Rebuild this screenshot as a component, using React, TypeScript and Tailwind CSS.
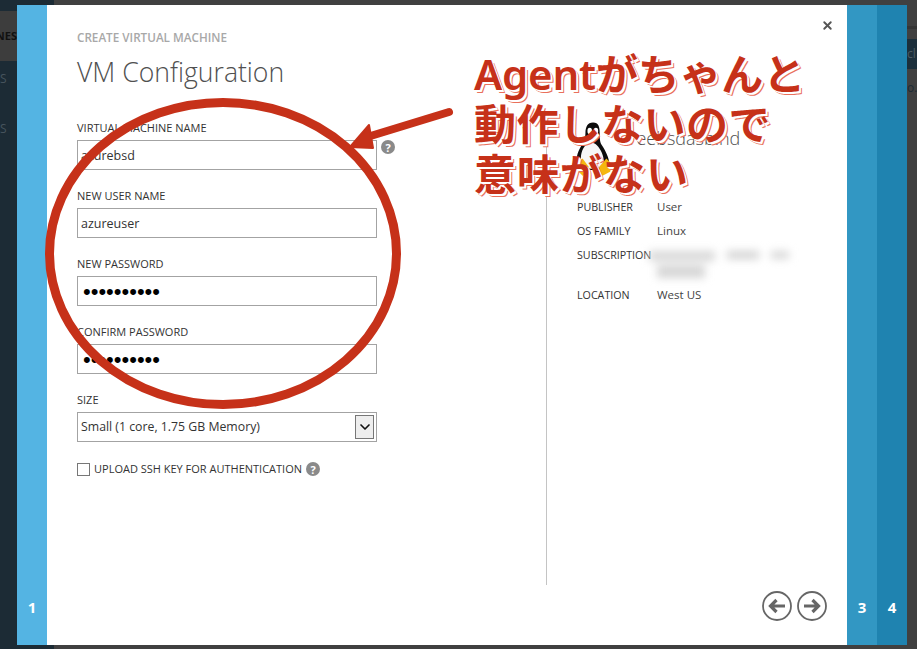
import React from "react";
import { X, ChevronDown } from "lucide-react";

const font = "font-['Open_Sans','Noto_Sans',sans-serif]";

const Help = () => (
  <span className="flex h-[14px] w-[14px] items-center justify-center rounded-full bg-[#8a8a8a] text-[11px] leading-none font-bold text-white">
    ?
  </span>
);

const Field = ({ label, value, password }: { label: string; value: string; password?: boolean }) => (
  <div className="h-[68px]">
    <div className="h-[20px] text-[11px] leading-[16px] font-medium text-[#333]">{label}</div>
    <input
      type={password ? "password" : "text"}
      defaultValue={value}
      className={
        password
          ? "block h-[30px] w-[300px] border border-[#a3a3a3] bg-white px-[5px] font-['Liberation_Sans',sans-serif] text-[22px] text-black outline-none"
          : "block h-[30px] w-[300px] border border-[#a3a3a3] bg-white px-[3px] text-[12.5px] text-[#333] outline-none"
      }
    />
  </div>
);

const Detail = ({ label, children, tall }: { label: string; children: React.ReactNode; tall?: boolean }) => (
  <div className={`flex ${tall ? "h-[40px]" : "h-[24px]"}`}>
    <div className="w-[80px] shrink-0 overflow-hidden text-[10.7px] leading-[24px] font-medium whitespace-nowrap text-[#333]">
      {label}
    </div>
    <div className="text-[11.5px] leading-[24px] text-[#444]">{children}</div>
  </div>
);

const Tux = () => (
  <svg width="38" height="58" viewBox="0 0 40 60" className="ml-[-2px] shrink-0">
    <path d="M19 1c-6 0-8 5-8 11 0 5-1 8-4 13-3 5-6 11-5 18 1 5 4 8 7 8h20c4 0 7-3 7-7 0-6-4-13-7-18-3-4-3-8-3-14S25 1 19 1z" fill="#0c0c0c" />
    <path d="M12 24c-5 5-7 13-5 19 2 5 6 7 12 7s10-2 11-7c1-6-3-14-7-18-3-3-8-4-11-1z" fill="#f6f6f6" />
    <ellipse cx="15.5" cy="10" rx="2.4" ry="3.4" fill="#fff" />
    <ellipse cx="22" cy="10" rx="2.4" ry="3.4" fill="#fff" />
    <path d="M14 15c2-2 8-2 10 0-2 3-8 3-10 0z" fill="#e9a413" />
    <path d="M1 44l7-5 6 8 1 7-7 3-6-6z" fill="#f5b70f" />
    <path d="M26 47l7-8 6 6-2 8-8 4-4-4z" fill="#f5b70f" />
  </svg>
);

const Annotation = () => (
  <>
    <svg className="absolute top-0 left-0" width="917" height="649" viewBox="0 0 917 649">
      <ellipse cx="223" cy="253.5" rx="173.5" ry="151" fill="none" stroke="#c63119" strokeWidth="9" />
      <path d="M449 112L364 138" stroke="#c63119" strokeWidth="8" strokeLinecap="round" />
      <path d="M350 147L369 125L373 148z" fill="#c63119" stroke="#c63119" strokeWidth="2" strokeLinejoin="round" />
    </svg>
    <div className="absolute top-[49px] left-[474px] font-['Noto_Sans','Noto_Sans_CJK_JP',sans-serif] text-[42px] leading-[50px] font-semibold whitespace-nowrap text-[#c63119] [text-shadow:1px_1px_0_#fff,2px_2px_0_#fff,3px_3px_0_#e9705c]">
      <div className="tracking-[-0.2px]">Agentがちゃんと</div>
      <div className="tracking-[0.4px]">動作しないので</div>
      <div className="tracking-[1px]">意味がない</div>
    </div>
  </>
);

export default function App() {
  return (
    <div className={`relative h-[649px] w-[917px] overflow-hidden bg-[#404040] ${font}`}>
      {/* page behind the dialog */}
      <div className="flex h-full justify-between">
        <div className="w-[54px] bg-[#1c2b35] pt-[11px]">
          <div className="flex h-[50px] items-center justify-end bg-[#3d3d3d] pr-[37px] text-[11px] font-bold text-[#111]">NES</div>
          <div className="mt-[9px] pr-[49px] text-right text-[12px] text-[#46545d]">S</div>
          <div className="mt-[32px] pr-[49px] text-right text-[12px] text-[#46545d]">S</div>
        </div>
        <div className="w-[10px] overflow-hidden pt-[26px]">
          <div className="h-[3px] bg-[#353535]" />
          <div className="mt-[10px] h-[30px] whitespace-nowrap bg-[#1c2f3b] text-[12px] leading-[30px] text-[#4c5a63]">cl</div>
          <div className="mt-[10px] text-[12px] whitespace-nowrap text-[#1c2b35]">o.n</div>
        </div>
      </div>

      {/* dialog */}
      <div className="absolute top-[5px] left-[17px] flex h-[640px] w-[890px]">
        <div className="flex w-[30px] items-end justify-center bg-[#54b4e3] pb-[27px] text-[15px] font-bold text-white">1</div>

        <div className="relative flex flex-1 bg-white pt-[25px] pl-[30px]">
          <div className="w-[469px]">
            <div className="text-[11.7px] leading-[15px] font-semibold text-[#a8a8a8]">CREATE VIRTUAL MACHINE</div>
            <h1 className="mt-[9px] text-[26.6px] leading-[36px] font-light text-[#505050]">VM Configuration</h1>
            <div className="mt-[30px]">
              <Field label="VIRTUAL MACHINE NAME" value="azurebsd" />
              <Field label="NEW USER NAME" value="azureuser" />
              <Field label="NEW PASSWORD" value="••••••••••" password />
              <Field label="CONFIRM PASSWORD" value="••••••••••" password />
              <div className="h-[20px] text-[11px] leading-[16px] font-medium text-[#333]">SIZE</div>
              <div className="flex h-[30px] w-[300px] items-center justify-between border border-[#a3a3a3] pr-[2px] pl-[3px] text-[12.3px] text-[#333]">
                Small (1 core, 1.75 GB Memory)
                <span className="flex h-[24px] w-[19px] items-center justify-center border border-[#777] bg-[#eeeeee]">
                  <ChevronDown size={16} strokeWidth={2.5} color="#111" />
                </span>
              </div>
              <div className="mt-[19px] flex items-center">
                <span className="h-[13px] w-[13px] border border-[#777]" />
                <span className="mr-[4px] ml-[4px] text-[11px] font-medium text-[#333]">UPLOAD SSH KEY FOR AUTHENTICATION</span>
                <Help />
              </div>
            </div>
          </div>

          <div className="mt-[90px] mb-[60px] flex-1 border-l border-[#c4c4c4] pl-[30px]">
            <div className="flex h-[60px] items-center">
              <Tux />
              <div className="mb-[24px] ml-[11px] text-[18px] font-light text-[#505050]">freebsdasb.nd</div>
            </div>
            <div className="mt-[15px]">
              <Detail label="PUBLISHER">User</Detail>
              <Detail label="OS FAMILY">Linux</Detail>
              <Detail label="SUBSCRIPTION" tall>
                <div className="ml-[-8px] pt-[8px] blur-[4px]">
                  <div className="flex gap-[12px]">
                    <span className="h-[10px] w-[66px] bg-[#d8d8d8]" />
                    <span className="h-[8px] w-[32px] bg-[#d2d2d2]" />
                    <span className="h-[8px] w-[18px] bg-[#d8d8d8]" />
                  </div>
                  <div className="mt-[4px] ml-[8px] h-[13px] w-[48px] bg-[#d6d6d6]" />
                </div>
              </Detail>
              <Detail label="LOCATION">West US</Detail>
            </div>
          </div>

          <button className="absolute top-[14px] right-[13px] text-[#555]">
            <X size={13} strokeWidth={3.5} />
          </button>
          <div className="absolute right-[20px] bottom-[24px] flex gap-[5px] text-[#666]">
            <svg width="30" height="30" viewBox="0 0 30 30" fill="none" stroke="currentColor">
              <circle cx="15" cy="15" r="14" strokeWidth="1.8" />
              <path d="M23 15H9M14.5 9L8.5 15L14.5 21" strokeWidth="3.2" />
            </svg>
            <svg width="30" height="30" viewBox="0 0 30 30" fill="none" stroke="currentColor">
              <circle cx="15" cy="15" r="14" strokeWidth="1.8" />
              <path d="M7 15H21M15.5 9L21.5 15L15.5 21" strokeWidth="3.2" />
            </svg>
          </div>
        </div>

        <div className="flex w-[30px] items-end justify-center bg-[#3297c3] pb-[27px] text-[15px] font-bold text-white">3</div>
        <div className="flex w-[30px] items-end justify-center bg-[#1f83b0] pb-[27px] text-[15px] font-bold text-white">4</div>
      </div>

      <div className="absolute top-[140px] left-[381px]"><Help /></div>
      <Annotation />
    </div>
  );
}
